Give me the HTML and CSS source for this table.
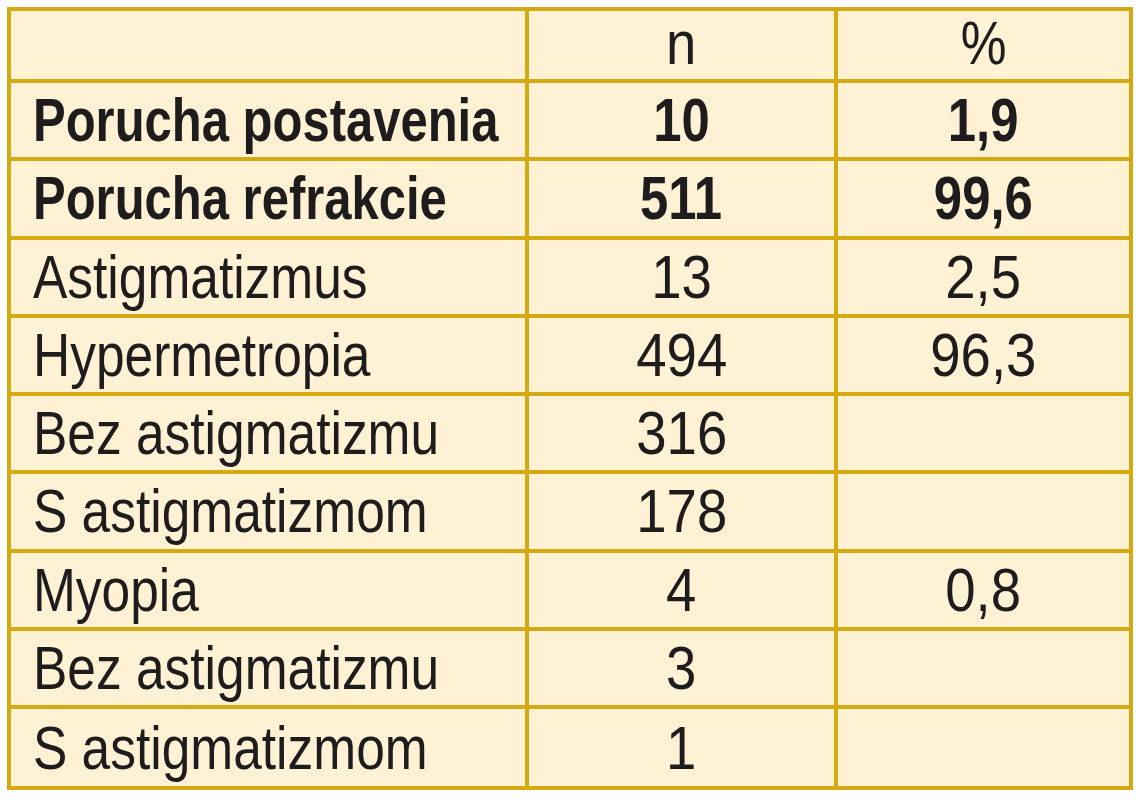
FILE: index.html
```html
<!DOCTYPE html>
<html lang="sk">
<head>
<meta charset="utf-8">
<title>Tabuľka</title>
<link rel="stylesheet" href="styles.css">
</head>
<body>
<table class="data">
  <colgroup>
    <col class="c-label">
    <col class="c-n">
    <col class="c-pct">
  </colgroup>
  <tr class="head">
    <td class="label"></td>
    <td class="num"><span class="t">n</span></td>
    <td class="num"><span class="t sym">%</span></td>
  </tr>
  <tr class="strong">
    <td class="label"><span class="t">Porucha postavenia</span></td>
    <td class="num"><span class="t">10</span></td>
    <td class="num"><span class="t">1,9</span></td>
  </tr>
  <tr class="strong">
    <td class="label"><span class="t">Porucha refrakcie</span></td>
    <td class="num"><span class="t">511</span></td>
    <td class="num"><span class="t">99,6</span></td>
  </tr>
  <tr>
    <td class="label"><span class="t">Astigmatizmus</span></td>
    <td class="num"><span class="t">13</span></td>
    <td class="num"><span class="t">2,5</span></td>
  </tr>
  <tr>
    <td class="label"><span class="t">Hypermetropia</span></td>
    <td class="num"><span class="t">494</span></td>
    <td class="num"><span class="t">96,3</span></td>
  </tr>
  <tr>
    <td class="label"><span class="t">Bez astigmatizmu</span></td>
    <td class="num"><span class="t">316</span></td>
    <td class="num"></td>
  </tr>
  <tr>
    <td class="label"><span class="t">S astigmatizmom</span></td>
    <td class="num"><span class="t">178</span></td>
    <td class="num"></td>
  </tr>
  <tr>
    <td class="label"><span class="t">Myopia</span></td>
    <td class="num"><span class="t">4</span></td>
    <td class="num"><span class="t">0,8</span></td>
  </tr>
  <tr>
    <td class="label"><span class="t">Bez astigmatizmu</span></td>
    <td class="num"><span class="t">3</span></td>
    <td class="num"></td>
  </tr>
  <tr class="last">
    <td class="label"><span class="t">S astigmatizmom</span></td>
    <td class="num"><span class="t">1</span></td>
    <td class="num"></td>
  </tr>
</table>
</body>
</html>
```
FILE: styles.css
```css
html, body {
  margin: 0;
  padding: 0;
  background: #ffffff;
}

body {
  padding: 7px;
}

.data {
  border-collapse: separate;
  border-spacing: 0;
  table-layout: fixed;
  width: 1126px;
  border: 4px solid #d4a912;
  background: #fef1d4;
  font-family: "Liberation Sans", Arial, sans-serif;
  font-size: 62px;
  color: #1f1c1d;
}

.c-label { width: 518px; }
.c-n { width: 309px; }
.c-pct { width: 291px; }

.data td {
  box-sizing: border-box;
  padding: 0;
  border-right: 4px solid #d4a912;
  border-bottom: 4px solid #d4a912;
  vertical-align: middle;
  white-space: nowrap;
  line-height: 62px;
}

.data td:last-child {
  border-right: 0;
}

.data tr {
  height: 78.25px;
}

.data tr.head {
  height: 72px;
}

.data tr.head td {
  padding-bottom: 5px;
}

.data tr.last {
  height: 77px;
}

.data tr.last td {
  border-bottom: 0;
}

.t {
  display: inline-block;
  transform: scaleX(0.83);
  transform-origin: center center;
}

.label {
  text-align: left;
  padding-left: 22px !important;
}

.label .t {
  transform-origin: left center;
}

.num {
  text-align: center;
}

.num .t {
  transform: scaleX(0.88);
}

.num .t.sym {
  transform: scaleX(0.83);
}

.strong td {
  font-weight: 700;
}

.strong .label .t {
  transform: scaleX(0.79);
}

.strong .num .t {
  transform: scaleX(0.82);
}
```
